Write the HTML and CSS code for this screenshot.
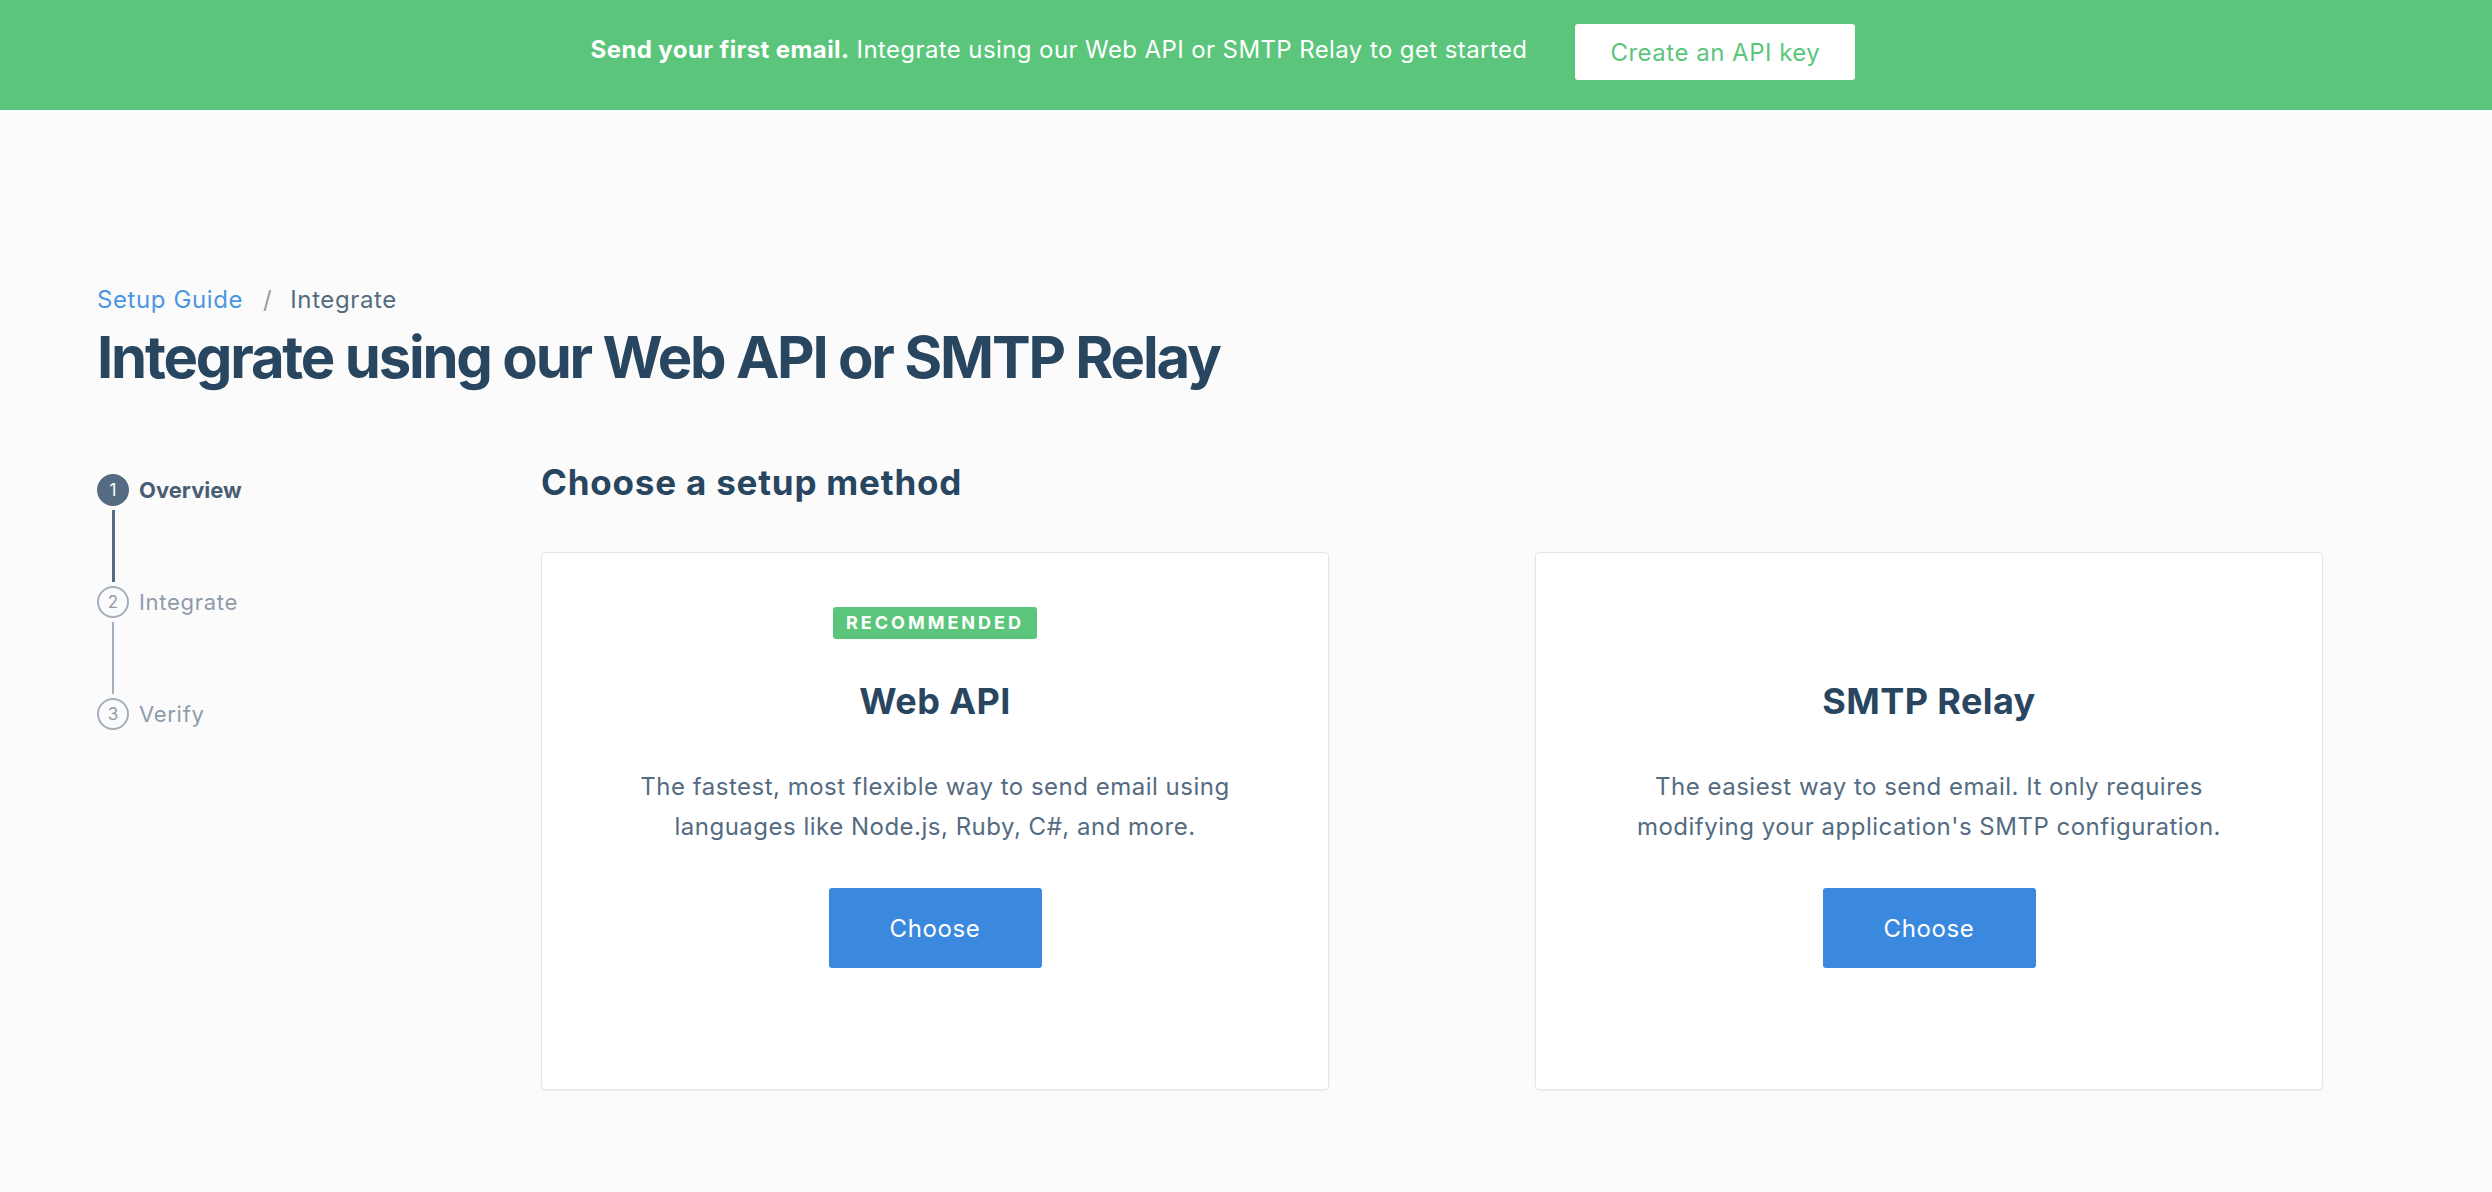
FILE: index.html
```html
<!DOCTYPE html>
<html lang="en">
<head>
<meta charset="utf-8">
<title>Integrate using our Web API or SMTP Relay</title>
<link rel="stylesheet" href="styles.css">
</head>
<body>
<div class="banner">
  <p class="banner-text"><strong>Send your first email.</strong> Integrate using our Web API or SMTP Relay to get started</p>
  <a class="banner-btn" href="#">Create an API key</a>
</div>
<main class="page">
  <nav class="crumbs">
    <a class="crumb-link" href="#">Setup Guide</a>
    <span class="crumb-sep">/</span>
    <span class="crumb-current">Integrate</span>
  </nav>
  <h1 class="page-title">Integrate using our Web API or SMTP Relay</h1>
  <div class="layout">
    <ol class="steps">
      <li class="step step-active"><span class="step-num">1</span><span class="step-label">Overview</span></li>
      <li class="step-line step-line-active"></li>
      <li class="step"><span class="step-num">2</span><span class="step-label">Integrate</span></li>
      <li class="step-line"></li>
      <li class="step"><span class="step-num">3</span><span class="step-label">Verify</span></li>
    </ol>
    <section class="methods">
      <h2 class="methods-title">Choose a setup method</h2>
      <div class="cards">
        <div class="card">
          <span class="badge">Recommended</span>
          <h3 class="card-title">Web API</h3>
          <p class="card-desc">The fastest, most flexible way to send email using languages like Node.js, Ruby, C#, and more.</p>
          <a class="btn" href="#">Choose</a>
        </div>
        <div class="card">
          <span class="badge badge-hidden">Recommended</span>
          <h3 class="card-title">SMTP Relay</h3>
          <p class="card-desc">The easiest way to send email. It only requires modifying your application's SMTP configuration.</p>
          <a class="btn" href="#">Choose</a>
        </div>
      </div>
    </section>
  </div>
</main>
</body>
</html>
```

FILE: styles.css
```css
* { box-sizing: border-box; }
html, body { margin: 0; padding: 0; }
body {
  background: #fbfbfb;
  font-family: Inter, Lato, "Liberation Sans", sans-serif;
  color: #294661;
  min-height: 1192px;
}
a { text-decoration: none; }

.banner {
  height: 110px;
  background: #5bc67b;
  display: flex;
  align-items: center;
  justify-content: center;
  gap: 48px;
  padding-right: 46px;
  padding-bottom: 6px;
}
.banner-text {
  margin: 0 0 5px;
  color: #fff;
  font-size: 24px;
  line-height: 30px;
  letter-spacing: 0.4px;
}
.banner-text strong { font-weight: 700; }
.banner-btn {
  display: flex;
  align-items: center;
  justify-content: center;
  width: 280px;
  height: 56px;
  background: #fff;
  border-radius: 3px;
  color: #5bc67b;
  font-size: 24px;
  letter-spacing: 0.5px;
}

.page {
  padding: 175px 0 0 97px;
}
.crumbs {
  display: flex;
  align-items: center;
  font-size: 24px;
  line-height: 30px;
  height: 30px;
  letter-spacing: 0.6px;
}
.crumb-link { color: #4b97e0; }
.crumb-sep { color: #9b9b9b; margin: 0 18px 0 20px; }
.crumb-current { color: #546b81; }

.page-title {
  margin: 7px 0 0;
  font-size: 58px;
  line-height: 70px;
  font-weight: 700;
  letter-spacing: -2.2px;
  color: #294661;
}

.layout {
  display: flex;
  margin-top: 69px;
}
.steps {
  list-style: none;
  margin: 13px 0 0;
  padding: 0;
  width: 444px;
  flex: none;
}
.step {
  display: flex;
  align-items: center;
  height: 32px;
  gap: 10px;
}
.step-num {
  width: 32px;
  height: 32px;
  border-radius: 50%;
  border: 2px solid #a3afbd;
  color: #8e9bab;
  display: flex;
  align-items: center;
  justify-content: center;
  font-size: 17px;
}
.step-label {
  font-size: 22px;
  color: #8e9bab;
  letter-spacing: 0.7px;
}
.step-active .step-num {
  background: #546b81;
  border-color: #546b81;
  color: #fff;
}
.step-active .step-label {
  color: #4a5d74;
  font-weight: 700;
  letter-spacing: 0;
}
.step-line {
  width: 2px;
  height: 72px;
  margin: 4px 0 4px 15px;
  background: #a3afbd;
}
.step-line-active {
  width: 3px;
  background: #546b81;
}

.methods { flex: none; }
.methods-title {
  margin: 0;
  font-size: 35px;
  line-height: 42px;
  font-weight: 700;
  letter-spacing: 0.8px;
  color: #294661;
}
.cards {
  display: flex;
  gap: 206px;
  margin-top: 49px;
}
.card {
  width: 788px;
  height: 538px;
  background: #fff;
  border: 1px solid #e4e6ea;
  border-radius: 4px;
  box-shadow: 0 1px 2px rgba(0, 0, 0, 0.05);
  display: flex;
  flex-direction: column;
  align-items: center;
  padding-top: 54px;
  text-align: center;
}
.badge {
  height: 32px;
  padding: 0 13px;
  background: #5bc67b;
  color: #fff;
  border-radius: 3px;
  font-size: 18px;
  font-weight: 700;
  letter-spacing: 3px;
  text-transform: uppercase;
  line-height: 32px;
}
.badge-hidden { visibility: hidden; }
.card-title {
  margin: 40px 0 0;
  font-size: 36px;
  line-height: 44px;
  font-weight: 700;
  letter-spacing: 0.4px;
  color: #294661;
}
.card-desc {
  margin: 44px 0 0;
  width: 630px;
  font-size: 24px;
  line-height: 40px;
  letter-spacing: 0.5px;
  color: #546b81;
}
.btn {
  margin-top: 41px;
  width: 213px;
  height: 80px;
  display: flex;
  align-items: center;
  justify-content: center;
  background: #3a89de;
  color: #fff;
  border-radius: 3px;
  font-size: 24px;
  letter-spacing: 0.6px;
}
```
